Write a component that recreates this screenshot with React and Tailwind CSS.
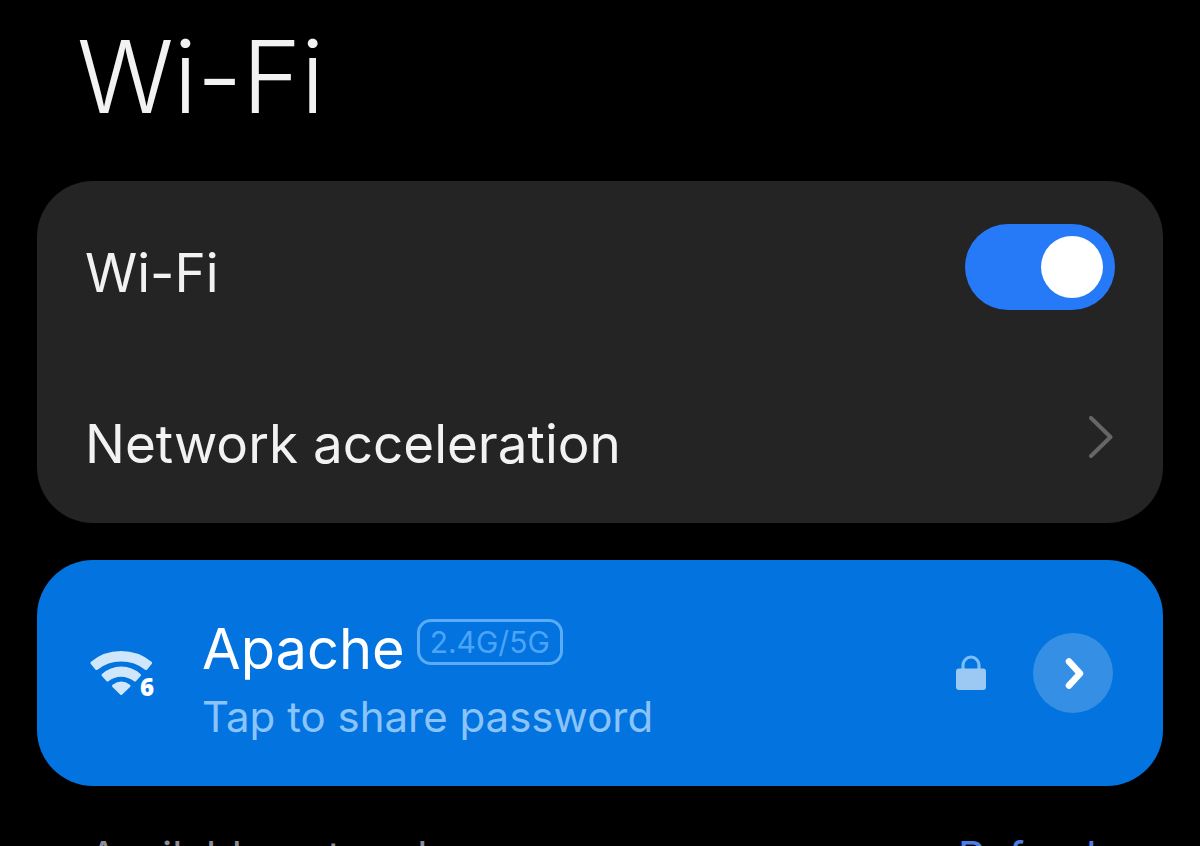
import React, { useState } from 'react';

const WifiSix = () => (
    <svg viewBox="0 0 66 50" className="mt-1 w-[66px] h-[50px] shrink-0" role="img" aria-label="Wi-Fi 6">
        <g fill="#cfe6fb" stroke="#cfe6fb" strokeWidth="3" strokeLinejoin="round">
            <path d="M2 13 C18 -1 44 -1 60.500 13 L56 18.500 C42 7 20.500 7 6.500 18.500 Z" />
            <path d="M13 25 C23.500 15.500 39 15.500 49.500 25 L45 30 C36.500 23.500 25.500 23.500 17.500 30 Z" />
            <path d="M23.500 36 Q31.500 30 39 36 L31.200 43.500 Z" />
        </g>
        <text x="50" y="46" fill="#fff" className="text-[24px] font-extrabold font-['Open_Sans',sans-serif]">6</text>
    </svg>
);

const Lock = () => (
    <svg viewBox="0 0 32 36" className="w-8 h-9 shrink-0" role="img" aria-label="Secured">
        <path d="M8 15 V10.500 a8 8.500 0 0 1 16 0 V15" fill="none" stroke="#7dbdf9" strokeWidth="3.200" />
        <rect x="1" y="13.500" width="30" height="21.500" rx="3" fill="#9cc9f4" />
    </svg>
);

const App = () => {
    const [enabled, setEnabled] = useState(true);

    return (
        <main className="h-screen overflow-hidden bg-black px-[37px] font-['Inter',sans-serif] text-[#f2f2f2]">
            <h1 className="pt-[17px] pl-10 text-[100px] leading-[120px] font-light">Wi-Fi</h1>

            <section className="mt-11 rounded-[56px] bg-[#242424] px-12">
                <label className="flex h-[171px] items-center justify-between">
                    <span className="pt-3 text-[53px] leading-[64px]">Wi-Fi</span>
                    <span className="flex">
                        <input
                            type="checkbox"
                            role="switch"
                            checked={enabled}
                            onChange={(e) => setEnabled(e.target.checked)}
                            className="peer sr-only"
                        />
                        <span className="flex h-[86px] w-[150px] items-center rounded-full bg-[#4a4a4a] p-3 peer-checked:justify-end peer-checked:bg-[#277af7]">
                            <span className="size-[62px] rounded-full bg-white" />
                        </span>
                    </span>
                </label>
                <button type="button" className="flex h-[171px] w-full items-center justify-between text-left">
                    <span className="pt-3 text-[53px] leading-[64px]">Network acceleration</span>
                    <svg viewBox="0 0 26 44" className="h-11 w-[26px]" aria-hidden="true">
                        <path d="M2 2 L21.500 21 L2 40" fill="none" stroke="#666" strokeWidth="4" strokeLinecap="round" strokeLinejoin="round" />
                    </svg>
                </button>
            </section>

            <section className="mt-[37px] flex h-[226px] items-center rounded-[56px] bg-[#0273df] pr-[50px] pl-[53px]">
                <WifiSix />
                <button type="button" className="ml-[46px] flex-1 pt-4 text-left">
                    <span className="flex items-start gap-3">
                        <span className="text-[56px] leading-[72px] text-white">Apache</span>
                        <span className="mt-1.5 rounded-[14px] border-[3px] border-[#5aacf9] px-2.5 text-[30px] leading-10 text-[#4ba4f8]">2.4G/5G</span>
                    </span>
                    <span className="block text-[42px] leading-[64px] text-[#8ac4fa]">Tap to share password</span>
                </button>
                <Lock />
                <button type="button" aria-label="Network details" className="ml-[46px] flex size-20 items-center justify-center rounded-full bg-[#348fe5]">
                    <svg viewBox="0 0 24 36" className="h-9 w-6" aria-hidden="true">
                        <path d="M8 6.500 L19 18.500 L8 30.500" fill="none" stroke="#fff" strokeWidth="6.500" strokeLinecap="round" strokeLinejoin="round" />
                    </svg>
                </button>
            </section>

            <div className="mt-[46px] flex justify-between pr-[52px] pl-[52px] text-[42px] leading-[50px]">
                <h2 className="text-[#8c8c96]">Available networks</h2>
                <button type="button" className="text-[#4a7fe8]">Refresh</button>
            </div>
        </main>
    );
};

export default App;
